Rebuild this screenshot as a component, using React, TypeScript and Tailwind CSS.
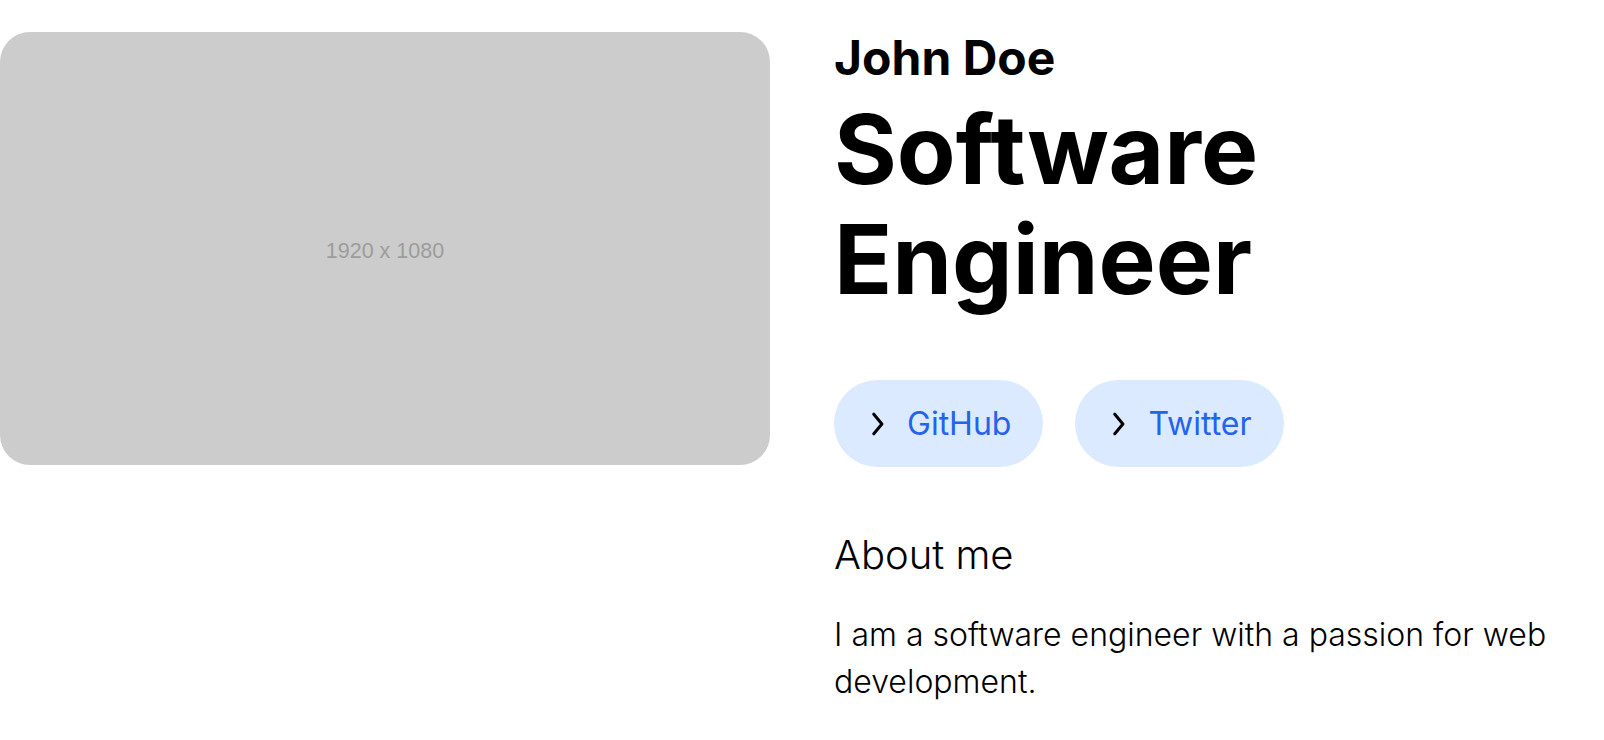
import React from "react";

type LinkItem = {
  label: string;
  href: string;
};

const links: LinkItem[] = [
  { label: "GitHub", href: "#" },
  { label: "Twitter", href: "#" },
];

const Chevron = () => (
  <svg width="12" height="24" viewBox="0 0 12 24" fill="none" className="shrink-0">
    <polyline
      points="1.8,2.2 9.9,12 1.8,21.8"
      stroke="#000"
      strokeWidth="3"
      strokeLinecap="round"
      strokeLinejoin="round"
    />
  </svg>
);

const SocialButton = ({ label, href }: LinkItem) => (
  <a
    href={href}
    className="flex items-center h-[87px] pl-[38px] pr-8 gap-[23px] rounded-full bg-[#dbeafe] text-[#2563eb] text-[32px] leading-none"
  >
    <Chevron />
    <span>{label}</span>
  </a>
);

const App = () => {
  return (
    <div className="min-h-screen bg-white text-black font-['Inter',sans-serif]">
      <div className="grid grid-cols-2 gap-16 pt-8">
        {/* placeholder picture */}
        <div className="aspect-video rounded-[30px] bg-[#cccccc] flex items-center justify-center pt-[5px]">
          <span className="font-['Liberation_Sans',Arial,sans-serif] text-[21.5px] text-[#9c9c9c]">
            1920 x 1080
          </span>
        </div>

        <div className="flex flex-col">
          <h2 className="text-[48px] leading-[52px] font-bold">John Doe</h2>
          <h1 className="mt-[10px] text-[96px] leading-[110px] font-bold">
            Software
            <br />
            Engineer
          </h1>

          <div className="flex gap-8 mt-[66px]">
            {links.map((link) => (
              <SocialButton key={link.label} {...link} />
            ))}
          </div>

          <h3 className="mt-16 text-[40px] leading-[48px] font-light">About me</h3>
          <p className="mt-8 text-[32px] leading-[47px] font-light">
            I am a software engineer with a passion for web development.
          </p>
        </div>
      </div>
    </div>
  );
};

export default App;
